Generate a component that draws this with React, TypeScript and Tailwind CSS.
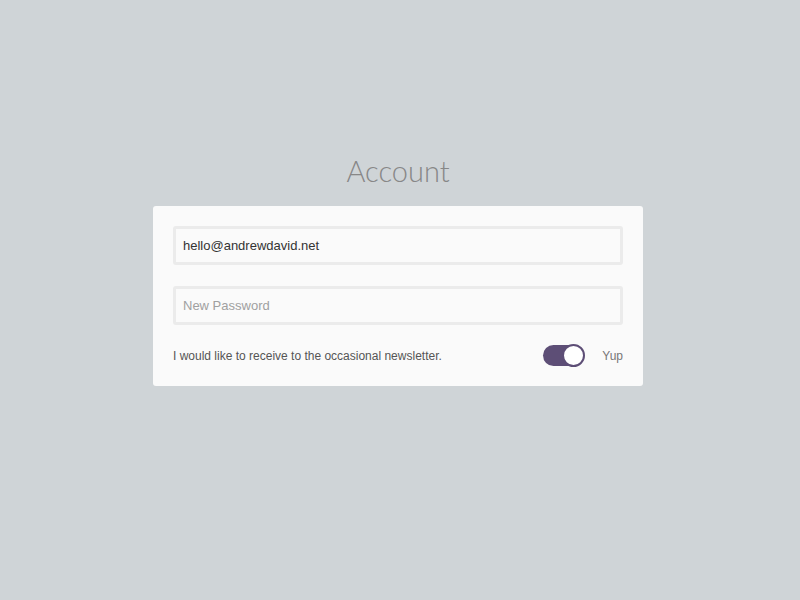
import * as React from 'react';

export default function App(): React.JSX.Element {
  const [on, setOn] = React.useState(true);

  return (
    <div className="flex h-[600px] w-full flex-col items-center bg-[#cfd4d7] pt-[152px] pr-[4px] font-['Liberation_Sans',Arial,sans-serif]">
      <h1 className="mb-[17px] font-['Lato',sans-serif] text-[29px] font-light leading-[37px] text-[#878787]">
        Account
      </h1>

      {/* Card */}
      <div className="w-[490px] rounded-[3px] bg-[#fafafa] px-5 pt-5 pb-[19px]">
        <input
          className="block h-[39px] w-full rounded-[3px] border-[3px] border-[#ebebeb] bg-[#fafafa] px-[7px] text-[13px] text-[#333] outline-none"
          defaultValue="hello@andrewdavid.net"
        />
        <input
          type="password"
          placeholder="New Password"
          className="mt-[21px] block h-[39px] w-full rounded-[3px] border-[3px] border-[#ebebeb] bg-[#fafafa] px-[7px] text-[13px] text-[#333] outline-none placeholder:text-[#a0a0a0]"
        />

        <div className="mt-[19px] flex items-center">
          <span className="flex-1 text-[12px] text-[#555]">
            I would like to receive to the occasional newsletter.
          </span>
          <button
            onClick={() => setOn(!on)}
            className="relative h-[23px] w-[42px] rounded-full"
          >
            <span
              className={
                on
                  ? 'absolute top-[1px] left-0 h-[21px] w-[40px] rounded-full bg-[#5d4e76]'
                  : 'absolute top-[1px] left-0 h-[21px] w-[40px] rounded-full bg-[#d6d6d6]'
              }
            />
            <span
              className={
                on
                  ? 'absolute top-0 right-0 h-[23px] w-[23px] rounded-full border-2 border-[#5d4e76] bg-white'
                  : 'absolute top-0 left-0 h-[23px] w-[23px] rounded-full border-2 border-[#d6d6d6] bg-white'
              }
            />
          </button>
          <span className="ml-[17px] text-[12px] text-[#777]">Yup</span>
        </div>
      </div>
    </div>
  );
}
